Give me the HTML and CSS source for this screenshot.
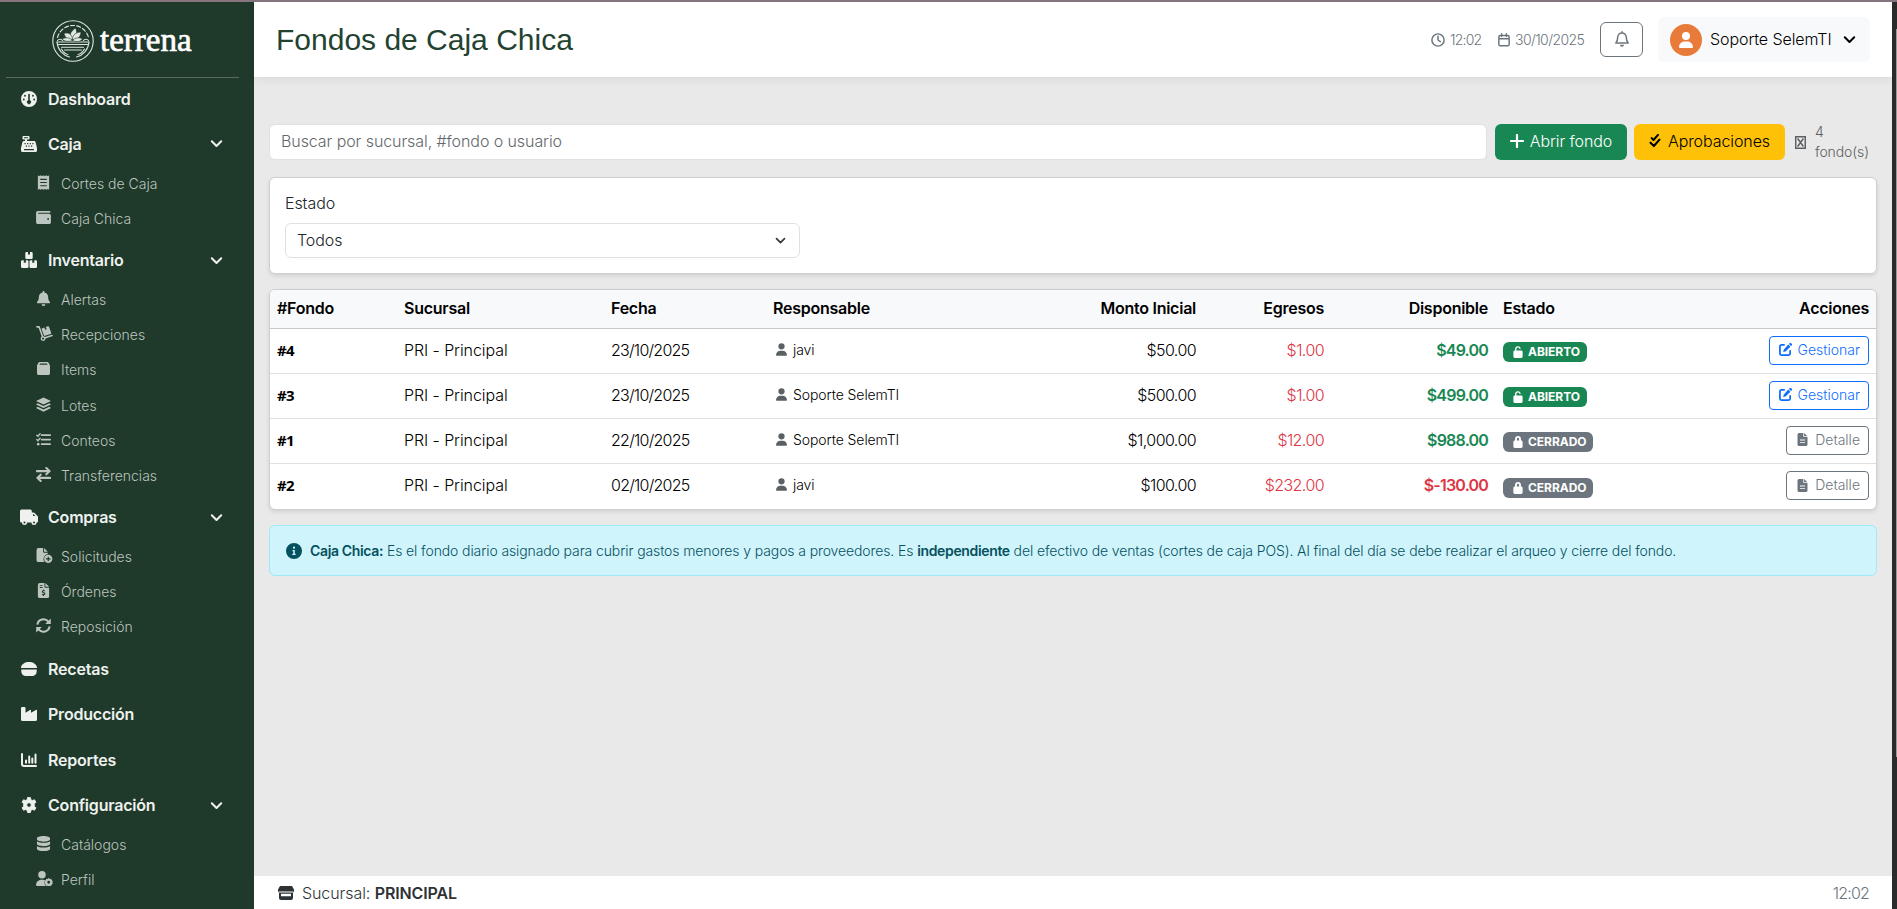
FILE: index.html
```html
<!DOCTYPE html>
<html lang="es">
<head>
<meta charset="utf-8">
<title>Fondos de Caja Chica</title>
<link rel="stylesheet" href="styles.css">
</head>
<body>
<svg class="sprite" aria-hidden="true">
  <symbol id="i-user" viewBox="0 0 448 512"><path d="M224 256A128 128 0 1 0 224 0a128 128 0 1 0 0 256zm-45.7 48C79.800 304 0 383.800 0 482.300C0 498.700 13.300 512 29.700 512H418.300c16.400 0 29.700-13.300 29.700-29.700C448 383.800 368.200 304 269.700 304H178.300z"/></symbol>
  <symbol id="i-bell" viewBox="0 0 448 512"><path d="M224 0c-17.700 0-32 14.300-32 32V51.200C119 66 64 130.600 64 208v18.800c0 47-17.300 92.400-48.500 127.600l-7.400 8.300c-8.400 9.400-10.400 22.900-5.300 34.400S19.400 416 32 416H416c12.600 0 24-7.400 29.200-18.900s3.100-25-5.300-34.400l-7.400-8.300C401.300 319.200 384 273.900 384 226.800V208c0-77.400-55-142-128-156.800V32c0-17.700-14.300-32-32-32zm45.300 493.300c12-12 18.700-28.300 18.700-45.300H160c0 17 6.700 33.300 18.700 45.300s28.300 18.700 45.300 18.700s33.300-6.700 45.300-18.700z"/></symbol>
  <symbol id="i-chev" viewBox="0 0 16 16"><path d="M2.200 5.200 8 11l5.800-5.800" fill="none" stroke="currentColor" stroke-width="2.500" stroke-linecap="round" stroke-linejoin="round"/></symbol>
  <symbol id="i-gauge" viewBox="0 0 16 16"><path fill-rule="evenodd" d="M8 0a8 8 0 1 0 0 16A8 8 0 0 0 8 0zM7.200 3.500a.8.8 0 0 1 1.600 0v5.800a2 2 0 1 1-1.600 0zM4 3.800a.95.95 0 1 1 0 1.900.95.95 0 0 1 0-1.900zm8 0a.95.95 0 1 1 0 1.900.95.95 0 0 1 0-1.900zM2.800 7.500a.95.95 0 1 1 0 1.900.95.95 0 0 1 0-1.900zm10.400 0a.95.95 0 1 1 0 1.900.95.95 0 0 1 0-1.900z"/></symbol>
  <symbol id="i-register" viewBox="0 0 16 16"><path fill-rule="evenodd" d="M2.500 0h5a1 1 0 0 1 1 1v1.500a1 1 0 0 1-1 1H6V5h7a1.600 1.600 0 0 1 1.600 1.300L16 12v2.500a1.500 1.500 0 0 1-1.500 1.500h-13A1.500 1.500 0 0 1 0 14.500V12l1.400-5.700A1.600 1.600 0 0 1 3 5h1V3.500H2.500a1 1 0 0 1-1-1V1a1 1 0 0 1 1-1zM3 1.300v1h4v-1zM3.500 7v1.200h1.200V7zm2.600 0v1.200h1.200V7zm2.600 0v1.200h1.200V7zm2.600 0v1.200h1.200V7zM4.800 9.500v1.200H6V9.500zm2.600 0v1.200h1.200V9.500zm2.600 0v1.200h1.200V9.500zM3 13v1.200h10V13z"/></symbol>
  <symbol id="i-receipt" viewBox="0 0 12 16"><path fill-rule="evenodd" d="M0 .3 1.500 1.200 3 .2l1.500 1L6 .2l1.500 1L9 .2l1.500 1L12 .3v15.400l-1.500-.9-1.500 1-1.500-1-1.500 1-1.500-1-1.500 1-1.500-1-1.500.9zM2.500 4v1.200h7V4zm0 3.400v1.200h7V7.400zm0 3.400V12h7v-1.200z"/></symbol>
  <symbol id="i-wallet" viewBox="0 0 16 14"><path fill-rule="evenodd" d="M2 0h12.500a1 1 0 0 1 0 2H2.600a.5.500 0 0 0 0 1H14a2 2 0 0 1 2 2v7a2 2 0 0 1-2 2H2a2 2 0 0 1-2-2V2a2 2 0 0 1 2-2zm11 7.500a1 1 0 1 0 0 2 1 1 0 0 0 0-2z"/></symbol>
  <symbol id="i-boxes" viewBox="0 0 16 16"><path d="M4.300 1.200A1.200 1.200 0 0 1 5.500 0H7v2.800l1-.6 1 .6V0h1.500a1.200 1.200 0 0 1 1.200 1.200v4.600A1.200 1.200 0 0 1 10.500 7h-5a1.200 1.200 0 0 1-1.200-1.200zM0 9.400a1.200 1.200 0 0 1 1.200-1.200h1.600V11l1-.6 1 .6V8.200h1.500A1.200 1.200 0 0 1 7.500 9.400v5.300a1.200 1.200 0 0 1-1.200 1.200H1.200A1.200 1.200 0 0 1 0 14.700zm8.500 0a1.200 1.200 0 0 1 1.200-1.200h1.600V11l1-.6 1 .6V8.200h1.500A1.200 1.200 0 0 1 16 9.400v5.300a1.200 1.200 0 0 1-1.200 1.200H9.700a1.200 1.200 0 0 1-1.200-1.200z"/></symbol>
  <symbol id="i-dolly" viewBox="0 0 18 16"><path d="M.9.900h2.300L7 11.500M9 12.900l8-2.800" fill="none" stroke="currentColor" stroke-width="1.700" stroke-linecap="round" stroke-linejoin="round"/><path d="M6 3.600a1 1 0 0 1 .6-1.200L8.800 1.600l.9 2.500 1.600-.6-.9-2.500L12.600.3a1 1 0 0 1 1.200.6l2.300 6.300a1 1 0 0 1-.6 1.200L9.600 10.500a1 1 0 0 1-1.200-.6z"/><circle cx="7.500" cy="13.400" r="1.900" fill="none" stroke="currentColor" stroke-width="1.400"/></symbol>
  <symbol id="i-box" viewBox="0 0 14 14"><path fill-rule="evenodd" d="M3 0h8a2 2 0 0 1 1.500.8L14 3.800V12a2 2 0 0 1-2 2H2a2 2 0 0 1-2-2V3.800L1.500.8A2 2 0 0 1 3 0zm.4 1.500L2.600 3h8.800l-.8-1.500z"/></symbol>
  <symbol id="i-layers" viewBox="0 0 16 16"><path d="M8 .5 16 4.300 8 8 0 4.300zM1.800 6.700 8 9.500l6.200-2.800L16 8 8 11.800 0 8zM1.800 10.500 8 13.300l6.200-2.800 1.800 1.300-8 3.800-8-3.800z"/></symbol>
  <symbol id="i-list" viewBox="0 0 16 14"><path d="m.8 2.300 1.200 1.200L4.300.8M.8 7.100 2 8.300l2.300-2.700" fill="none" stroke="currentColor" stroke-width="1.500" stroke-linecap="round"/><circle cx="2.300" cy="12" r="1.400"/><path d="M6 2.200h9.200M6 7.100h9.200M6 12h9.200" stroke="currentColor" stroke-width="1.900" stroke-linecap="round"/></symbol>
  <symbol id="i-swap" viewBox="0 0 16 16"><path d="M1 4.400h13M11 1l3.600 3.400L11 7.800M15 11.600H2M5 8.200l-3.600 3.400L5 15" fill="none" stroke="currentColor" stroke-width="2.200" stroke-linecap="round" stroke-linejoin="round"/></symbol>
  <symbol id="i-truck" viewBox="0 0 18 15"><path fill-rule="evenodd" d="M1.500 0h8.800a1.500 1.500 0 0 1 1.500 1.500V3h1.700a1.500 1.500 0 0 1 1.100.5l2.900 2.900a1.500 1.500 0 0 1 .5 1.100V12a1 1 0 0 1-1 1H16.500a2.500 2.500 0 0 1-5 0H7a2.500 2.500 0 0 1-5 0h-.5A1.500 1.500 0 0 1 0 11.500v-10A1.500 1.500 0 0 1 1.500 0zM13 4.800v1.700h2.300l-1.600-1.700zM4.500 12a1 1 0 1 0 0 2 1 1 0 0 0 0-2zm9.500 0a1 1 0 1 0 0 2 1 1 0 0 0 0-2z"/></symbol>
  <symbol id="i-fileplus" viewBox="0 0 17 16"><path fill-rule="evenodd" d="M2 0h5v4a1 1 0 0 0 1 1h4v1.500A5.300 5.300 0 0 0 8.500 15H2a2 2 0 0 1-2-2V2a2 2 0 0 1 2-2zm6 0 4 4H8zM12.500 7.200a4.400 4.400 0 1 1 0 8.800 4.400 4.400 0 0 1 0-8.800zm-.6 2v1.800H10v1.200h1.900V14h1.200v-1.800H15V11h-1.900V9.200z"/></symbol>
  <symbol id="i-invoice" viewBox="0 0 12 16"><path fill-rule="evenodd" d="M2 0h5v4a1 1 0 0 0 1 1h4v9a2 2 0 0 1-2 2H2a2 2 0 0 1-2-2V2a2 2 0 0 1 2-2zm6 0 4 4H8zM2 2v1h3V2zm0 2.200v1h3v-1zM5.500 7v.8C4 8 3.600 9.900 5 10.500l1.500.6c.5.200.3.800-.4.800-.6 0-1-.2-1.500-.4l-.4 1.100c.4.200.9.400 1.300.4v.8h1V13c1.700-.3 2-2.300.6-2.900l-1.500-.6c-.5-.2-.4-.7.300-.7.5 0 .9.100 1.300.3l.3-1.100c-.3-.1-.7-.2-1-.2V7z"/></symbol>
  <symbol id="i-sync" viewBox="0 0 16 16"><path d="M1.500 7a6.600 6.600 0 0 1 11.700-3.200M14.500 9a6.600 6.600 0 0 1-11.700 3.200" fill="none" stroke="currentColor" stroke-width="2.200"/><path d="M15.800.5V6.400H9.800zM.2 15.500V9.600h6z"/></symbol>
  <symbol id="i-burger" viewBox="0 0 16 14"><path d="M0 5.300C.8 2 3.800 0 8 0s7.200 2 8 5.300a.5.500 0 0 1-.5.600H.5a.5.500 0 0 1-.5-.6zM.3 7.400h15.400v2.100a4.500 4.500 0 0 1-4.500 4.500H4.800A4.500 4.500 0 0 1 .3 9.500z"/></symbol>
  <symbol id="i-factory" viewBox="0 0 16 14"><path d="M1 0h2.500a1 1 0 0 1 1 1v4.700L9 2.900a.7.700 0 0 1 1 .6v2.200l4.900-2.800a.7.700 0 0 1 1.100.6V12.500a1.500 1.500 0 0 1-1.500 1.500h-13A1.500 1.500 0 0 1 0 12.500V1a1 1 0 0 1 1-1z"/></symbol>
  <symbol id="i-chart" viewBox="0 0 16 14"><path d="M1 1v10a2 2 0 0 0 2 2h12M5 9.800V7.600M8.200 9.800V3.600M11.300 9.800V5.600M14.500 9.800V1.600" fill="none" stroke="currentColor" stroke-width="2" stroke-linecap="round"/></symbol>
  <symbol id="i-gear" viewBox="0 0 16 16"><path fill-rule="evenodd" d="M6.600.5h2.800l.5 2.200 1.400.8 2.200-.7 1.400 2.400-1.600 1.600v2.400l1.600 1.600-1.400 2.400-2.200-.7-1.400.8-.5 2.200H6.600l-.5-2.200-1.400-.8-2.200.7-1.400-2.400 1.600-1.600V6.800L1.100 5.200l1.400-2.400 2.200.7 1.400-.8zM8 5.700a2.300 2.300 0 1 0 0 4.600 2.300 2.300 0 0 0 0-4.600z" stroke="currentColor" stroke-width=".9" stroke-linejoin="round"/></symbol>
  <symbol id="i-db" viewBox="0 0 14 16"><path d="M0 2.500C0 1.100 3.100 0 7 0s7 1.100 7 2.500v1C14 4.900 10.900 6 7 6S0 4.900 0 3.500zM0 5.700C1.500 6.800 4 7.300 7 7.300s5.500-.5 7-1.600v2.600c0 1.400-3.100 2.500-7 2.500S0 9.700 0 8.300zM0 10.600c1.500 1.100 4 1.600 7 1.600s5.500-.5 7-1.600v2.900C14 14.900 10.900 16 7 16s-7-1.100-7-2.500z"/></symbol>
  <symbol id="i-usercog" viewBox="0 0 18 16"><circle cx="6.300" cy="4" r="4"/><path d="M0 15c0-3.200 2.500-5.700 5.700-5.700h1.600c.9 0 1.700.2 2.400.5A5.300 5.300 0 0 0 10.600 16H1a1 1 0 0 1-1-1z"/><path fill-rule="evenodd" d="M13.500 7.200l1 1.300 1.600-.3.600 1.600 1.200.8-.6 1.400.6 1.500-1.300.9-.5 1.500-1.600-.2-1 1.300-1-1.300-1.600.2-.5-1.500-1.300-.9.600-1.500-.6-1.400 1.300-.8.500-1.600 1.600.3zm0 3.300a1.500 1.500 0 1 0 0 3 1.500 1.500 0 0 0 0-3z"/></symbol>
  <symbol id="i-clock" viewBox="0 0 16 16"><g fill="none" stroke="currentColor" stroke-width="1.700" stroke-linecap="round" stroke-linejoin="round"><circle cx="8" cy="8" r="7"/><path d="M8 3.800V8l2.700 1.800"/></g></symbol>
  <symbol id="i-cal" viewBox="0 0 14 16"><path d="M2.500 2.800h9a1.500 1.500 0 0 1 1.500 1.500v9a1.500 1.500 0 0 1-1.500 1.500h-9A1.500 1.500 0 0 1 1 13.300v-9a1.500 1.500 0 0 1 1.500-1.500zM1 6.600h12M4.200.8v3M9.800.8v3" fill="none" stroke="currentColor" stroke-width="1.700" stroke-linecap="round"/></symbol>
  <symbol id="i-bello" viewBox="0 0 14 16"><path d="M7 .8v1M2.700 6.300a4.300 4.300 0 0 1 8.600 0c0 3 .6 4.300 1.900 5.700H.8c1.300-1.400 1.900-2.700 1.900-5.700z" fill="none" stroke="currentColor" stroke-width="1.500" stroke-linecap="round" stroke-linejoin="round"/><path d="M5 13.800h4a2 2 0 0 1-4 0z"/></symbol>
  <symbol id="i-plus" viewBox="0 0 14 14"><path d="M7 1v12M1 7h12" stroke="currentColor" stroke-width="2.200" stroke-linecap="round"/></symbol>
  <symbol id="i-checks" viewBox="0 0 12 15"><path d="m2.400 4.400 2 2L9.200 1M1.200 9.300l3.600 3.600 6-6.800" fill="none" stroke="currentColor" stroke-width="2.200" stroke-linecap="round" stroke-linejoin="round"/></symbol>
  <symbol id="i-unlock" viewBox="0 0 10 13"><path fill-rule="evenodd" d="M1.800 5V3.200a3.100 3.100 0 0 1 6-.9.700.7 0 0 1-1.400.5A1.600 1.600 0 0 0 3.300 3.200V5h5.200A1.500 1.500 0 0 1 10 6.500v5A1.500 1.500 0 0 1 8.500 13h-7A1.500 1.500 0 0 1 0 11.500v-5A1.500 1.500 0 0 1 1.500 5z"/></symbol>
  <symbol id="i-lock" viewBox="0 0 10 13"><path fill-rule="evenodd" d="M1.800 5V3.200a3.200 3.200 0 0 1 6.400 0V5h.3A1.500 1.500 0 0 1 10 6.500v5A1.500 1.500 0 0 1 8.500 13h-7A1.500 1.500 0 0 1 0 11.500v-5A1.500 1.500 0 0 1 1.500 5zm2 0h2.400V3.200a1.200 1.200 0 0 0-2.400 0z"/></symbol>
  <symbol id="i-edit" viewBox="0 0 14 14"><path d="M5.500 2H2.600A1.600 1.600 0 0 0 1 3.600v7.800A1.600 1.600 0 0 0 2.600 13h7.800a1.600 1.600 0 0 0 1.600-1.600V8.500" fill="none" stroke="currentColor" stroke-width="1.900" stroke-linecap="round"/><path d="M10 1.700 12.300 4 7.600 8.700a1.500 1.500 0 0 1-.7.400l-2.400.6.600-2.400a1.500 1.500 0 0 1 .4-.7zM10.700 1l.6-.6a1.300 1.300 0 0 1 1.900 0l.4.400a1.300 1.300 0 0 1 0 1.900l-.6.600z"/></symbol>
  <symbol id="i-file" viewBox="0 0 10 13"><path fill-rule="evenodd" d="M1.600 0h4.200v3.300a.8.800 0 0 0 .8.800H10v7.300A1.600 1.600 0 0 1 8.400 13H1.600A1.600 1.600 0 0 1 0 11.400V1.600A1.600 1.600 0 0 1 1.600 0zm5 0L10 3.300H6.600zM2.500 6.500v.9h5v-.9zm0 2.700v.9h5v-.9z"/></symbol>
  <symbol id="i-info" viewBox="0 0 16 16"><path fill-rule="evenodd" d="M8 0a8 8 0 1 0 0 16A8 8 0 0 0 8 0zm0 3.600a1.100 1.100 0 1 1 0 2.200 1.100 1.100 0 0 1 0-2.200zM6.500 7h2.300v3.800h.8V12H6.300v-1.200h1V8.200h-.8z"/></symbol>
  <symbol id="i-store" viewBox="0 0 16 14"><path fill-rule="evenodd" d="M2 0h12l2 3.500V5a1.600 1.600 0 0 1-1 1.400V12a2 2 0 0 1-2 2H3a2 2 0 0 1-2-2V6.400A1.600 1.600 0 0 1 0 5V3.500zM1 5.600v.9h14v-.9zm2 2.200v2.500h10V7.800z"/></symbol>
  <symbol id="i-missing" viewBox="0 0 11 13"><path d="M.7.700h9.600v11.600H.7zM2.600 2.500l5.800 8M8.400 2.500l-5.800 8" fill="none" stroke="currentColor" stroke-width="1.500"/></symbol>
</svg>

<div class="window-edge"></div>
<div class="app">
  <aside class="sidebar">
    <div class="brand">
      <svg class="brand-mark" viewBox="0 0 42 42">
        <g fill="none" stroke="#dfe7e0" stroke-width="1.100" stroke-linecap="round">
          <circle cx="21" cy="21" r="20.200"/>
          <path d="M5.500 17.500A16 16 0 0 1 36.500 17.500" stroke-dasharray="4 2.200"/>
          <path d="M5 22h32M6.500 24.500h29M9.500 27.300h22M12.500 30h17"/>
          <path d="M5 22c.8 8 6 13.500 12.500 15M37 22c-.8 8-6 13.500-12.500 15M9.500 29c2 3.500 4 5 6.500 5.500M32.500 29c-2 3.500-4 5-6.500 5.500"/>
          <path d="M5.500 20.500c1.500-2 4-1.500 5 0M31.500 20.500c1-1.500 3.500-2 5 0"/>
        </g>
        <g fill="#dfe7e0" stroke="#1f392b" stroke-width=".6"><path d="M20.500 19.500c-3.500-4-3-7 3-11.500 2 4 1.500 8-3 11.500z"/><path d="M20.500 19.500c-5 .5-7.500-2-8.500-6 5-1.500 8 1 8.500 6z"/><path d="M20.500 19.500c0-4.500 3.500-7.500 8.500-7.500-.5 5-3.500 8-8.500 7.500z"/><path d="M20.500 20.500c-4 1.500-8.500 1-10.500-1.500 4-2 8-1.500 10.500 1.500z"/><path d="M20.500 20.500c2.500-3 7-3.500 10-1.500-1.500 2.500-6 3.500-10 1.500z"/></g>
      </svg>
      <span class="brand-name">terrena</span>
    </div>
    <nav class="nav">
      <a class="main"><svg><use href="#i-gauge"/></svg>Dashboard</a>
      <a class="main"><svg><use href="#i-register"/></svg>Caja<svg class="chev"><use href="#i-chev"/></svg></a>
      <div class="subs">
        <a><svg><use href="#i-receipt"/></svg>Cortes de Caja</a>
        <a><svg class="low"><use href="#i-wallet"/></svg>Caja Chica</a>
      </div>
      <a class="main"><svg><use href="#i-boxes"/></svg>Inventario<svg class="chev"><use href="#i-chev"/></svg></a>
      <div class="subs">
        <a><svg><use href="#i-bell"/></svg>Alertas</a>
        <a><svg class="wide"><use href="#i-dolly"/></svg>Recepciones</a>
        <a><svg class="low"><use href="#i-box"/></svg>Items</a>
        <a><svg><use href="#i-layers"/></svg>Lotes</a>
        <a><svg class="low"><use href="#i-list"/></svg>Conteos</a>
        <a><svg><use href="#i-swap"/></svg>Transferencias</a>
      </div>
      <a class="main"><svg class="wide"><use href="#i-truck"/></svg>Compras<svg class="chev"><use href="#i-chev"/></svg></a>
      <div class="subs">
        <a><svg class="wide"><use href="#i-fileplus"/></svg>Solicitudes</a>
        <a><svg><use href="#i-invoice"/></svg>Órdenes</a>
        <a><svg><use href="#i-sync"/></svg>Reposición</a>
      </div>
      <a class="main"><svg class="low"><use href="#i-burger"/></svg>Recetas</a>
      <a class="main"><svg class="low"><use href="#i-factory"/></svg>Producción</a>
      <a class="main"><svg class="low"><use href="#i-chart"/></svg>Reportes</a>
      <a class="main"><svg><use href="#i-gear"/></svg>Configuración<svg class="chev"><use href="#i-chev"/></svg></a>
      <div class="subs">
        <a><svg><use href="#i-db"/></svg>Catálogos</a>
        <a><svg class="wide"><use href="#i-usercog"/></svg>Perfil</a>
      </div>
    </nav>
  </aside>

  <div class="page">
    <header class="topbar">
      <h1>Fondos de Caja Chica</h1>
      <span class="meta time"><svg><use href="#i-clock"/></svg>12:02</span>
      <span class="meta date"><svg><use href="#i-cal"/></svg>30/10/2025</span>
      <button class="bell"><svg><use href="#i-bello"/></svg></button>
      <div class="user">
        <span class="avatar"><svg><use href="#i-user"/></svg></span>
        <span class="user-name">Soporte SelemTI</span>
        <svg class="chev"><use href="#i-chev"/></svg>
      </div>
    </header>

    <main class="content">
      <div class="toolbar">
        <input class="search" type="text" placeholder="Buscar por sucursal, #fondo o usuario">
        <button class="btn green"><svg><use href="#i-plus"/></svg>Abrir fondo</button>
        <button class="btn yellow"><svg><use href="#i-checks"/></svg>Aprobaciones</button>
        <div class="count"><svg><use href="#i-missing"/></svg><span>4 fondo(s)</span></div>
      </div>

      <section class="card filter">
        <label>Estado</label>
        <div class="select">Todos<svg><use href="#i-chev"/></svg></div>
      </section>

      <section class="card">
        <table>
          <colgroup><col class="c1"><col class="c2"><col class="c3"><col class="c4"><col class="c5"><col class="c6"><col class="c7"><col class="c8"><col></colgroup>
          <thead><tr><th>#Fondo</th><th>Sucursal</th><th>Fecha</th><th>Responsable</th><th class="r">Monto Inicial</th><th class="r">Egresos</th><th class="r">Disponible</th><th>Estado</th><th class="r">Acciones</th></tr></thead>
          <tbody>
            <tr><td class="id">#4</td><td>PRI - Principal</td><td class="num">23/10/2025</td><td class="who"><svg><use href="#i-user"/></svg>javi</td><td class="r num">$50.00</td><td class="r num red">$1.00</td><td class="r num ok">$49.00</td><td><span class="badge open"><svg><use href="#i-unlock"/></svg>ABIERTO</span></td><td class="r"><button class="act blue"><svg><use href="#i-edit"/></svg>Gestionar</button></td></tr>
            <tr><td class="id">#3</td><td>PRI - Principal</td><td class="num">23/10/2025</td><td class="who"><svg><use href="#i-user"/></svg>Soporte SelemTI</td><td class="r num">$500.00</td><td class="r num red">$1.00</td><td class="r num ok">$499.00</td><td><span class="badge open"><svg><use href="#i-unlock"/></svg>ABIERTO</span></td><td class="r"><button class="act blue"><svg><use href="#i-edit"/></svg>Gestionar</button></td></tr>
            <tr><td class="id">#1</td><td>PRI - Principal</td><td class="num">22/10/2025</td><td class="who"><svg><use href="#i-user"/></svg>Soporte SelemTI</td><td class="r num">$1,000.00</td><td class="r num red">$12.00</td><td class="r num ok">$988.00</td><td><span class="badge"><svg><use href="#i-lock"/></svg>CERRADO</span></td><td class="r"><button class="act"><svg><use href="#i-file"/></svg>Detalle</button></td></tr>
            <tr><td class="id">#2</td><td>PRI - Principal</td><td class="num">02/10/2025</td><td class="who"><svg><use href="#i-user"/></svg>javi</td><td class="r num">$100.00</td><td class="r num red">$232.00</td><td class="r num neg">$-130.00</td><td><span class="badge"><svg><use href="#i-lock"/></svg>CERRADO</span></td><td class="r"><button class="act"><svg><use href="#i-file"/></svg>Detalle</button></td></tr>
          </tbody>
        </table>
      </section>

      <div class="alert"><svg><use href="#i-info"/></svg><p><b>Caja Chica:</b> Es el fondo diario asignado para cubrir gastos menores y pagos a proveedores. Es <b>independiente</b> del efectivo de ventas (cortes de caja POS). Al final del día se debe realizar el arqueo y cierre del fondo.</p></div>
    </main>

    <footer class="foot">
      <svg><use href="#i-store"/></svg><span>Sucursal: <b>PRINCIPAL</b></span><span class="foot-time">12:02</span>
    </footer>
  </div>
  <div class="scroll-edge"><i></i></div>
</div>
</body>
</html>
```
FILE: styles.css
```css
* { box-sizing: border-box; }
html, body { height: 100%; }
body {
  margin: 0;
  height: 909px;
  overflow: hidden;
  display: flex;
  flex-direction: column;
  font: 350 16px/24px Inter, "Liberation Sans", sans-serif;
  letter-spacing: -0.08px;
  color: #212529;
}
svg { fill: currentColor; flex: none; display: block; }
button, input { font: inherit; letter-spacing: inherit; margin: 0; }
.sprite { position: absolute; width: 0; height: 0; }
.window-edge { height: 2px; flex: none; background: #87757f; }
.app { flex: 1; min-height: 0; display: flex; }

/* Sidebar */
.sidebar { width: 254px; background: #1f392b; color: #eef1ee; overflow: hidden; }
.brand {
  height: 76px;
  margin: 0 15px 0 6px;
  padding: 0 0 0 46px;
  border-bottom: 1px solid #586b60;
  display: flex;
  align-items: center;
  gap: 6px;
}
.brand-mark { width: 42px; height: 42px; margin-top: 3px; }
.brand-name {
  font: 400 33px/42px "Liberation Serif", serif;
  letter-spacing: 0;
  color: #fff;
  -webkit-text-stroke: 0.7px #fff;
}
.nav a { display: flex; align-items: center; }
.main {
  height: 41.5px;
  margin-bottom: 4px;
  padding-left: 21px;
  font-weight: 600;
  letter-spacing: -0.2px;
}
.nav .main:first-child { height: 41px; }
.main svg { width: 16px; height: 16px; margin-right: 11px; }
.main svg.wide { width: 18px; margin-left: -1px; margin-right: 10px; }
.main svg.low { height: 14px; }
.main .chev { width: 13px; height: 13px; margin: 0 31px 0 auto; }
.subs { margin: -2.500px 0 3px; padding-left: 36px; }
.subs a { height: 35.2px; font-size: 14px; letter-spacing: 0; color: #bcc5bf; }
.subs svg { width: 15px; height: 15px; margin: -3px 10px 0 0; }
.subs svg.low { height: 13px; }
.subs svg.wide { width: 17px; margin-right: 8px; }

/* Page frame */
.page { width: 1638px; display: flex; flex-direction: column; background: #e9e9e9; }
.scroll-edge { flex: 1; background: #2b2b2b; display: flex; justify-content: flex-end; padding-top: 27px; }
.scroll-edge i { width: 1px; height: 728px; background: #9a9a9a; }

.topbar {
  height: 75px;
  flex: none;
  background: #fff;
  box-shadow: 0 2px 10px rgba(0, 0, 0, .07);
  display: flex;
  align-items: center;
  padding: 0 22px 0 22px;
}
h1 { margin: 0 auto 0 0; font: 400 30px/36px "Liberation Sans", sans-serif; letter-spacing: 0; color: #234330; }
.meta { display: flex; align-items: center; font-size: 14px; color: #6c757d; }
.meta svg { width: 14px; height: 14px; margin-right: 5px; }
.time { letter-spacing: -0.8px; width: 67px; }
.date { letter-spacing: -0.6px; width: 102px; }
.date svg { width: 12px; }
.bell {
  width: 43px; height: 35px;
  padding: 0;
  border: 1px solid #6c757d;
  border-radius: 6px;
  background: #fff;
  color: #6c757d;
  display: grid;
  place-items: center;
}
.bell svg { width: 14px; height: 16px; margin-bottom: 1px; }
.user {
  width: 212px; height: 45px;
  margin-left: 15px;
  padding-left: 12px;
  border-radius: 6px;
  background: #f8f9fb;
  color: #000;
  display: flex;
  align-items: center;
}
.avatar { width: 32px; height: 32px; border-radius: 50%; background: #e97b3a; color: #fff; display: grid; place-items: center; margin-right: 8px; }
.avatar svg { width: 14px; height: 16px; }
.user-name { width: 133px; padding-bottom: 1px; }
.user .chev { width: 13px; height: 13px; }

/* Content */
.content { flex: 1; padding: 47px 15px 0; }
.toolbar { height: 36px; display: flex; align-items: center; margin-bottom: 17px; }
.search {
  width: 1218px; height: 36px;
  padding: 0 11px 2px;
  border: 1px solid #dee2e6;
  border-radius: 6px;
  background: #fff;
}
.search::placeholder { color: #63686c; opacity: 1; }
.btn { height: 36px; border: 0; border-radius: 6px; display: flex; align-items: center; justify-content: center; padding: 0 0 2px; }
.green { width: 132px; margin-left: 8px; background: #198754; color: #fff; }
.yellow { width: 151px; margin-left: 7px; background: #ffc107; color: #000; }
.btn svg { width: 14px; height: 14px; margin-right: 6px; }
.yellow svg { width: 12px; height: 14px; margin-right: 7px; }
.count { margin-left: 10px; display: flex; align-items: center; font-size: 14px; line-height: 20px; color: #5c6064; }
.count svg { width: 11px; height: 13px; margin-right: 9px; }
.count span { width: 55px; letter-spacing: -0.1px; }

.card {
  background: #fff;
  border: 1px solid #cfcfd0;
  border-radius: 6px;
  box-shadow: 0 2px 4px rgba(0, 0, 0, .1);
  overflow: hidden;
  margin-bottom: 15px;
}
.filter { height: 97px; padding: 13px 15px; }
.filter label { display: block; margin-bottom: 8px; }
.select {
  width: 515px; height: 35px;
  padding: 0 12px 2px 11px;
  border: 1px solid #dee2e6;
  border-radius: 6px;
  display: flex;
  align-items: center;
  justify-content: space-between;
}
.select svg { width: 11px; height: 11px; margin: 2px 1px 0 0; color: #343a40; }

table { width: 100%; border-collapse: collapse; table-layout: fixed; color: #000; }
.c1 { width: 126px; } .c2 { width: 207px; } .c3 { width: 162px; } .c4 { width: 277px; } .c5 { width: 162px; }
.c6 { width: 128px; } .c7 { width: 164px; } .c8 { width: 120px; }
th, td { padding: 0 8px; text-align: left; font-weight: 350; white-space: nowrap; }
th:first-child, td:first-child, th:nth-child(8), td:nth-child(8) { padding-left: 7px; }
th:last-child, td:last-child { padding-right: 7px; }
th { height: 38px; padding-bottom: 1px; background: #f8f9fb; border-bottom: 1px solid #c5c8cb; font-weight: 600; letter-spacing: -0.25px; }
td { height: 45px; padding-bottom: 2px; border-bottom: 1px solid #dee0e2; }
tr:last-child td { height: 46px; border-bottom-width: 0; }
.r { text-align: right; }
.num { letter-spacing: -0.58px; }
.id { font: 700 15px/24px "Noto Sans", sans-serif; letter-spacing: -0.6px; }
td:nth-child(3) { letter-spacing: -0.75px; }
.who { font-size: 14px; }
.who svg { display: inline-block; width: 11px; height: 13px; margin: 0 6px 0 3px; vertical-align: -1px; color: #5b6063; }
.red, .neg { color: #dc3545; }
.ok { color: #198754; }
.ok, .neg { font-weight: 600; letter-spacing: -0.8px; }
.badge {
  display: inline-flex;
  align-items: center;
  height: 20px;
  margin: 3px 0 0 0;
  padding: 0 7px 0 10px;
  border-radius: 6px;
  background: #6c757d;
  color: #fff;
  font-size: 12px;
  font-weight: 700;
  letter-spacing: -0.05px;
  vertical-align: middle;
}
.open { background: #198754; }
.badge svg { width: 10px; height: 12px; margin-right: 5px; }
.act {
  display: inline-flex;
  align-items: center;
  height: 29px;
  margin-top: 1px;
  padding: 0 8px 1px 9px;
  border: 1px solid #6c757d;
  border-radius: 4px;
  background: #fff;
  color: #6c757d;
  font-size: 14px;
  line-height: 20px;
  letter-spacing: 0;
  vertical-align: middle;
}
.act svg { width: 13px; height: 13px; margin-right: 6px; }
.blue { color: #0d6efd; border-color: #0d6efd; }

.alert {
  height: 51px;
  padding: 0 16px;
  border: 1px solid #9eeaf9;
  border-radius: 6px;
  background: #cff4fc;
  color: #055160;
  display: flex;
  align-items: center;
  font-size: 14px;
  letter-spacing: -0.11px;
}
.alert svg { width: 16px; height: 16px; margin-right: 8px; }
.alert p { margin: 0; white-space: nowrap; }
b { font-weight: 600; letter-spacing: -0.35px; }
.foot b { letter-spacing: -0.1px; }

.foot { height: 33px; flex: none; background: #fff; display: flex; align-items: center; padding: 0 23px 0 24px; color: #2d3236; }
.foot svg { width: 16px; height: 14px; margin-right: 8px; }
.foot-time { margin-left: auto; color: #6c757d; letter-spacing: -0.8px; }
```
